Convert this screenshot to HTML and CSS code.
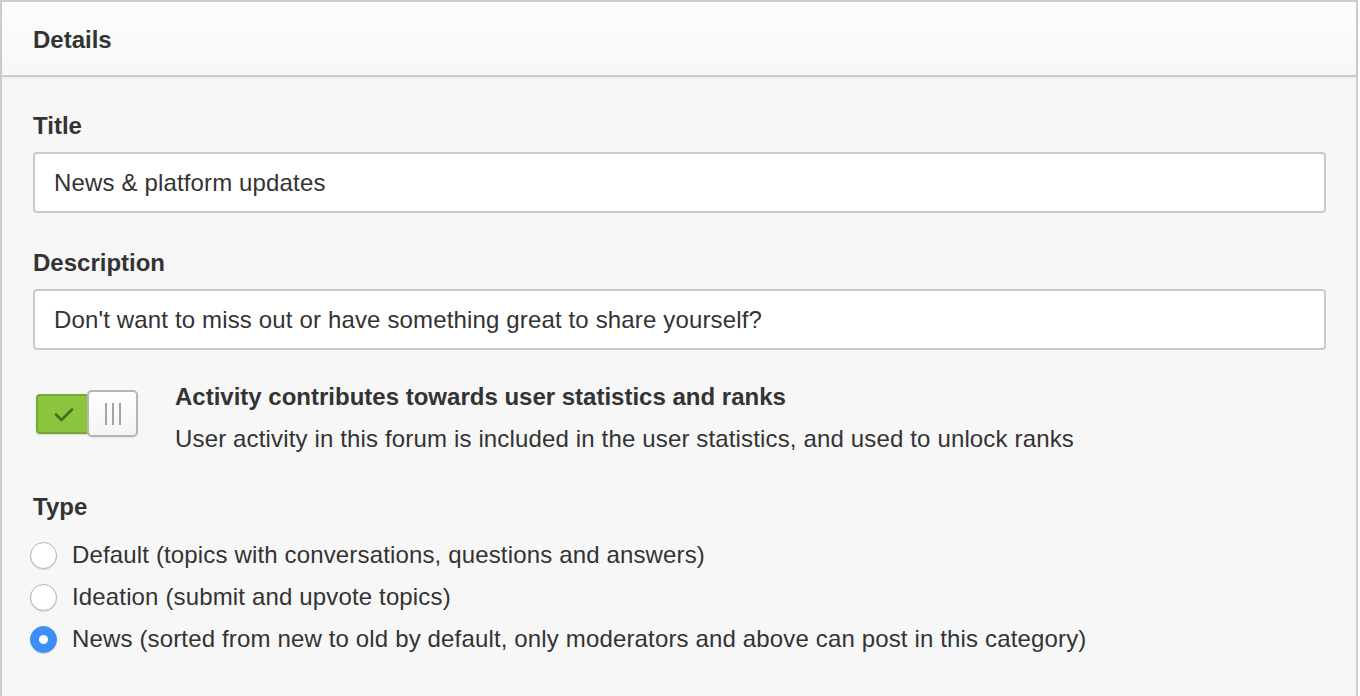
FILE: index.html
```html
<!DOCTYPE html>
<html lang="en">
<head>
<meta charset="utf-8">
<title>Details</title>
<link rel="stylesheet" href="styles.css">
</head>
<body>
<section class="panel">
  <header class="panel-header">Details</header>
  <div class="panel-body">
    <div class="field">
      <label class="field-label" for="title">Title</label>
      <input class="text-input" id="title" type="text" value="News &amp; platform updates">
    </div>
    <div class="field">
      <label class="field-label" for="desc">Description</label>
      <input class="text-input" id="desc" type="text" value="Don't want to miss out or have something great to share yourself?">
    </div>
    <div class="toggle-row">
      <div class="toggle">
        <span class="toggle-track">
          <svg class="check" width="20" height="16" viewBox="0 0 20 16"><path d="M2 7.5 L7.5 13 L18 2.5" fill="none" stroke="#4b6e1e" stroke-width="2.8" stroke-linecap="round" stroke-linejoin="round"/></svg>
        </span>
        <span class="toggle-knob"><i></i><i></i><i></i></span>
      </div>
      <div class="toggle-text">
        <div class="toggle-title">Activity contributes towards user statistics and ranks</div>
        <div class="toggle-desc">User activity in this forum is included in the user statistics, and used to unlock ranks</div>
      </div>
    </div>
    <div class="type-group">
      <div class="field-label">Type</div>
      <div class="radio-item"><span class="radio"></span><span>Default (topics with conversations, questions and answers)</span></div>
      <div class="radio-item"><span class="radio"></span><span>Ideation (submit and upvote topics)</span></div>
      <div class="radio-item"><span class="radio checked"></span><span>News (sorted from new to old by default, only moderators and above can post in this category)</span></div>
    </div>
  </div>
</section>
</body>
</html>
```

FILE: styles.css
```css
html, body {
  margin: 0;
  padding: 0;
  background: #ffffff;
}

body {
  font-family: "Liberation Sans", Arial, Helvetica, sans-serif;
  color: #333333;
  font-size: 24px;
  line-height: 28px;
  letter-spacing: 0.15px;
}

.panel {
  width: 1358px;
  min-height: 696px;
  box-sizing: border-box;
  border: 2px solid #cdcdcd;
  border-bottom: none;
  background: #f7f7f7;
}

.panel-header {
  padding: 24px 31px 21px;
  font-weight: bold;
  font-size: 24px;
  line-height: 28px;
  letter-spacing: 0;
  background: linear-gradient(#fdfdfd, #f7f7f7);
  border-bottom: 2px solid #cccccc;
  box-shadow: 0 1px 2px rgba(0, 0, 0, 0.06);
}

.panel-body {
  padding: 35px 30px 0 31px;
}

.field {
  display: flex;
  flex-direction: column;
}

.field + .field {
  margin-top: 36px;
}

.field-label {
  display: block;
  font-weight: bold;
  font-size: 24px;
  line-height: 28px;
  letter-spacing: 0;
  margin-bottom: 12px;
}

.text-input {
  display: block;
  height: 61px;
  box-sizing: border-box;
  border: 2px solid #cacaca;
  border-radius: 4px;
  background: #ffffff;
  padding: 0 19px;
  margin: 0;
  font-family: inherit;
  font-size: 24px;
  letter-spacing: 0.15px;
  color: #333333;
  outline: none;
}

.toggle-row {
  display: flex;
  align-items: flex-start;
  margin-top: 33px;
}

.toggle {
  display: flex;
  align-items: center;
  margin: 7px 0 0 3px;
  height: 47px;
}

.toggle-track {
  width: 52px;
  height: 40px;
  box-sizing: border-box;
  border: 2px solid #77a833;
  border-right: none;
  border-radius: 4px 0 0 4px;
  background: #8cc63f;
  display: flex;
  align-items: center;
  justify-content: center;
  box-shadow: 0 1px 2px rgba(0, 0, 0, 0.12);
}

.check {
  display: block;
  margin: 2px 0 0 1px;
}

.toggle-knob {
  width: 51px;
  height: 47px;
  margin-left: -1px;
  box-sizing: border-box;
  border: 2px solid #b5b5b5;
  border-radius: 5px;
  background: linear-gradient(#ffffff, #f4f4f4);
  display: flex;
  align-items: center;
  justify-content: center;
  gap: 5px;
  box-shadow: 0 1px 2px rgba(0, 0, 0, 0.08);
}

.toggle-knob i {
  display: block;
  width: 2px;
  height: 22px;
  background: #a3a3a3;
}

.toggle-text {
  margin-left: 37px;
}

.toggle-title {
  font-weight: bold;
  font-size: 24px;
  line-height: 28px;
  letter-spacing: 0;
}

.toggle-desc {
  margin-top: 14px;
  font-size: 24px;
  line-height: 28px;
}

.type-group {
  margin-top: 40px;
}

.type-group .field-label {
  margin-bottom: 13px;
}

.radio-item {
  display: flex;
  align-items: center;
  height: 42px;
  line-height: 42px;
}

.radio {
  width: 27px;
  height: 27px;
  box-sizing: border-box;
  border-radius: 50%;
  border: 1px solid #b4b4b4;
  background: #ffffff;
  box-shadow: 0 1px 1px rgba(0, 0, 0, 0.12);
  margin: 0 15px 0 -3px;
  flex: none;
  display: flex;
  align-items: center;
  justify-content: center;
}

.radio.checked {
  border-color: #3a8cf5;
  background: #3b8ff6;
}

.radio.checked::after {
  content: "";
  width: 9px;
  height: 9px;
  border-radius: 50%;
  background: #ffffff;
}
```
